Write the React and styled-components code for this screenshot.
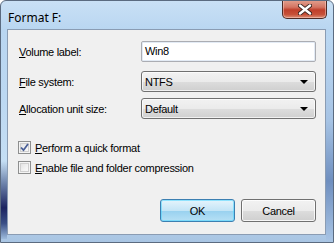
import React from "react";
import styled, { createGlobalStyle } from "styled-components";

const Global = createGlobalStyle`
  html, body { margin: 0; padding: 0; background: #fff; }
  body { font-family: "Liberation Sans", Arial, sans-serif; }
`;

const Window = styled.div`
  position: relative;
  width: 334px;
  height: 243px;
  box-sizing: border-box;
  display: flex;
  flex-direction: column;
  border: 1px solid #5b6b80;
  border-radius: 6px 6px 0 0;
  background: linear-gradient(180deg, #c9e0f5 0%, #b9d6f1 12%, #bcd8f2 40%, #c6dff4 70%, #a9c5e3 100%);
  overflow: hidden;
`;

const SideGlow = styled.div`
  position: absolute;
  left: 0;
  top: 160px;
  width: 6px;
  height: 78px;
  background: linear-gradient(180deg, rgba(170,200,230,0) 0%, #6a7fa8 30%, #1c2460 60%, #3a4f86 80%, rgba(150,180,215,0.6) 100%);
`;

const RightGlow = styled.div`
  position: absolute;
  right: 0;
  top: 40px;
  width: 7px;
  height: 200px;
  background: linear-gradient(180deg, rgba(190,215,240,0) 0%, #a6c3e4 40%, #6f8fbf 70%, #a8c4e4 100%);
`;

const TitleBar = styled.div`
  height: 28px;
  display: flex;
  align-items: flex-start;
  padding-left: 7px;
  position: relative;
`;

const Title = styled.span`
  margin-top: 8px;
  font-family: "Noto Sans", "Open Sans", sans-serif;
  font-size: 12px;
  color: #000;
`;

const CloseButton = styled.div`
  position: absolute;
  right: 6px;
  top: -1px;
  width: 45px;
  height: 19px;
  box-sizing: border-box;
  border: 1px solid #4d2b26;
  border-top: none;
  border-radius: 0 0 5px 5px;
  background: linear-gradient(180deg, #e3a290 0%, #d37462 40%, #bf3f2b 55%, #c65038 80%, #dc8f76 100%);
  box-shadow: inset 0 0 0 1px rgba(255,220,210,0.45);
  display: flex;
  align-items: center;
  justify-content: center;
`;

const Client = styled.div`
  flex: 1;
  margin: 0 7px 7px 6px;
  border: 1px solid #8a9cb3;
  background: #f0f0f0;
  display: flex;
  flex-direction: column;
  padding: 11px 9px 0 11px;
  font-family: "Liberation Sans", Arial, sans-serif;
  font-size: 11px;
  letter-spacing: -0.3px;
  color: #000;
`;

const FieldRow = styled.div`
  display: grid;
  grid-template-columns: 122px 1fr;
  align-items: center;
  height: 21px;
  margin-top: ${(p) => p.$gap || 0}px;
`;

const Label = styled.label`
  padding-top: 1px;
`;

const Key = styled.span`
  text-decoration: underline;
`;

const TextBox = styled.div`
  height: 21px;
  box-sizing: border-box;
  border: 1px solid #abadb3;
  border-radius: 2px;
  background: #fff;
  padding: 3px 0 0 3px;
  box-shadow: inset 0 0 0 1px rgba(200,215,235,0.5);
`;

const Combo = styled.div`
  height: 21px;
  box-sizing: border-box;
  border: 1px solid #707070;
  border-radius: 3px;
  background: linear-gradient(180deg, #f2f2f2 0%, #ebebeb 50%, #dddddd 51%, #cfcfcf 100%);
  box-shadow: inset 0 0 0 1px rgba(255,255,255,0.7);
  display: flex;
  align-items: center;
  justify-content: space-between;
  padding: 0 7px 0 3px;
`;

const Arrow = styled.span`
  width: 0;
  height: 0;
  border-left: 4px solid transparent;
  border-right: 4px solid transparent;
  border-top: 4px solid #000;
  margin-top: 1px;
`;

const CheckRow = styled.div`
  display: flex;
  align-items: center;
  gap: 4px;
  height: 13px;
  margin-top: ${(p) => p.$gap}px;
  margin-left: -1px;
`;

const Box = styled.span`
  width: 13px;
  height: 13px;
  box-sizing: border-box;
  border: 1px solid #8e8f8f;
  background: linear-gradient(135deg, #dcdcdc 0%, #f4f4f4 60%, #fbfbfb 100%);
  box-shadow: inset 0 0 0 1px #f4f4f4, inset 0 0 0 2px #cfcfcf;
  display: flex;
  align-items: center;
  justify-content: center;
  flex-shrink: 0;
`;

const Buttons = styled.div`
  display: flex;
  justify-content: flex-end;
  gap: 6px;
  margin-top: 25px;
`;

const Button = styled.div`
  width: 75px;
  height: 23px;
  box-sizing: border-box;
  border: 1px solid ${(p) => (p.$default ? "#3c7fb1" : "#707070")};
  border-radius: 3px;
  background: ${(p) =>
    p.$default
      ? "linear-gradient(180deg, #e5f4fc 0%, #c4e5f6 50%, #98d1ef 51%, #b6e0f5 100%)"
      : "linear-gradient(180deg, #f2f2f2 0%, #ebebeb 50%, #dddddd 51%, #cfcfcf 100%)"};
  box-shadow: inset 0 0 0 1px ${(p) => (p.$default ? "#48d4ff88" : "rgba(255,255,255,0.8)")};
  display: flex;
  align-items: center;
  justify-content: center;
`;

export default function App() {
  return (
    <>
      <Global />
      <Window>
        <SideGlow />
        <RightGlow />
        <TitleBar>
          <Title>Format F:</Title>
          <CloseButton>
            <svg width="14" height="11" viewBox="0 0 14 11">
              <path d="M2 1.5 L12 9.5 M12 1.5 L2 9.5" stroke="#3a2520" strokeWidth="4.2" strokeLinecap="round" />
              <path d="M2 1.5 L12 9.5 M12 1.5 L2 9.5" stroke="#fff" strokeWidth="2.4" strokeLinecap="round" />
            </svg>
          </CloseButton>
        </TitleBar>
        <Client>
          <FieldRow>
            <Label><Key>V</Key>olume label:</Label>
            <TextBox>Win8</TextBox>
          </FieldRow>
          <FieldRow $gap={9}>
            <Label><Key>F</Key>ile system:</Label>
            <Combo>NTFS<Arrow /></Combo>
          </FieldRow>
          <FieldRow $gap={6}>
            <Label><Key>A</Key>llocation unit size:</Label>
            <Combo>Default<Arrow /></Combo>
          </FieldRow>
          <CheckRow $gap={22}>
            <Box>
              <svg width="9" height="9" viewBox="0 0 9 9">
                <path d="M1 4.5 L3.5 7.2 L8 1" fill="none" stroke="#4a5f97" strokeWidth="1.8" />
              </svg>
            </Box>
            <span><Key>P</Key>erform a quick format</span>
          </CheckRow>
          <CheckRow $gap={7}>
            <Box />
            <span><Key>E</Key>nable file and folder compression</span>
          </CheckRow>
          <Buttons>
            <Button $default>OK</Button>
            <Button>Cancel</Button>
          </Buttons>
        </Client>
      </Window>
    </>
  );
}
